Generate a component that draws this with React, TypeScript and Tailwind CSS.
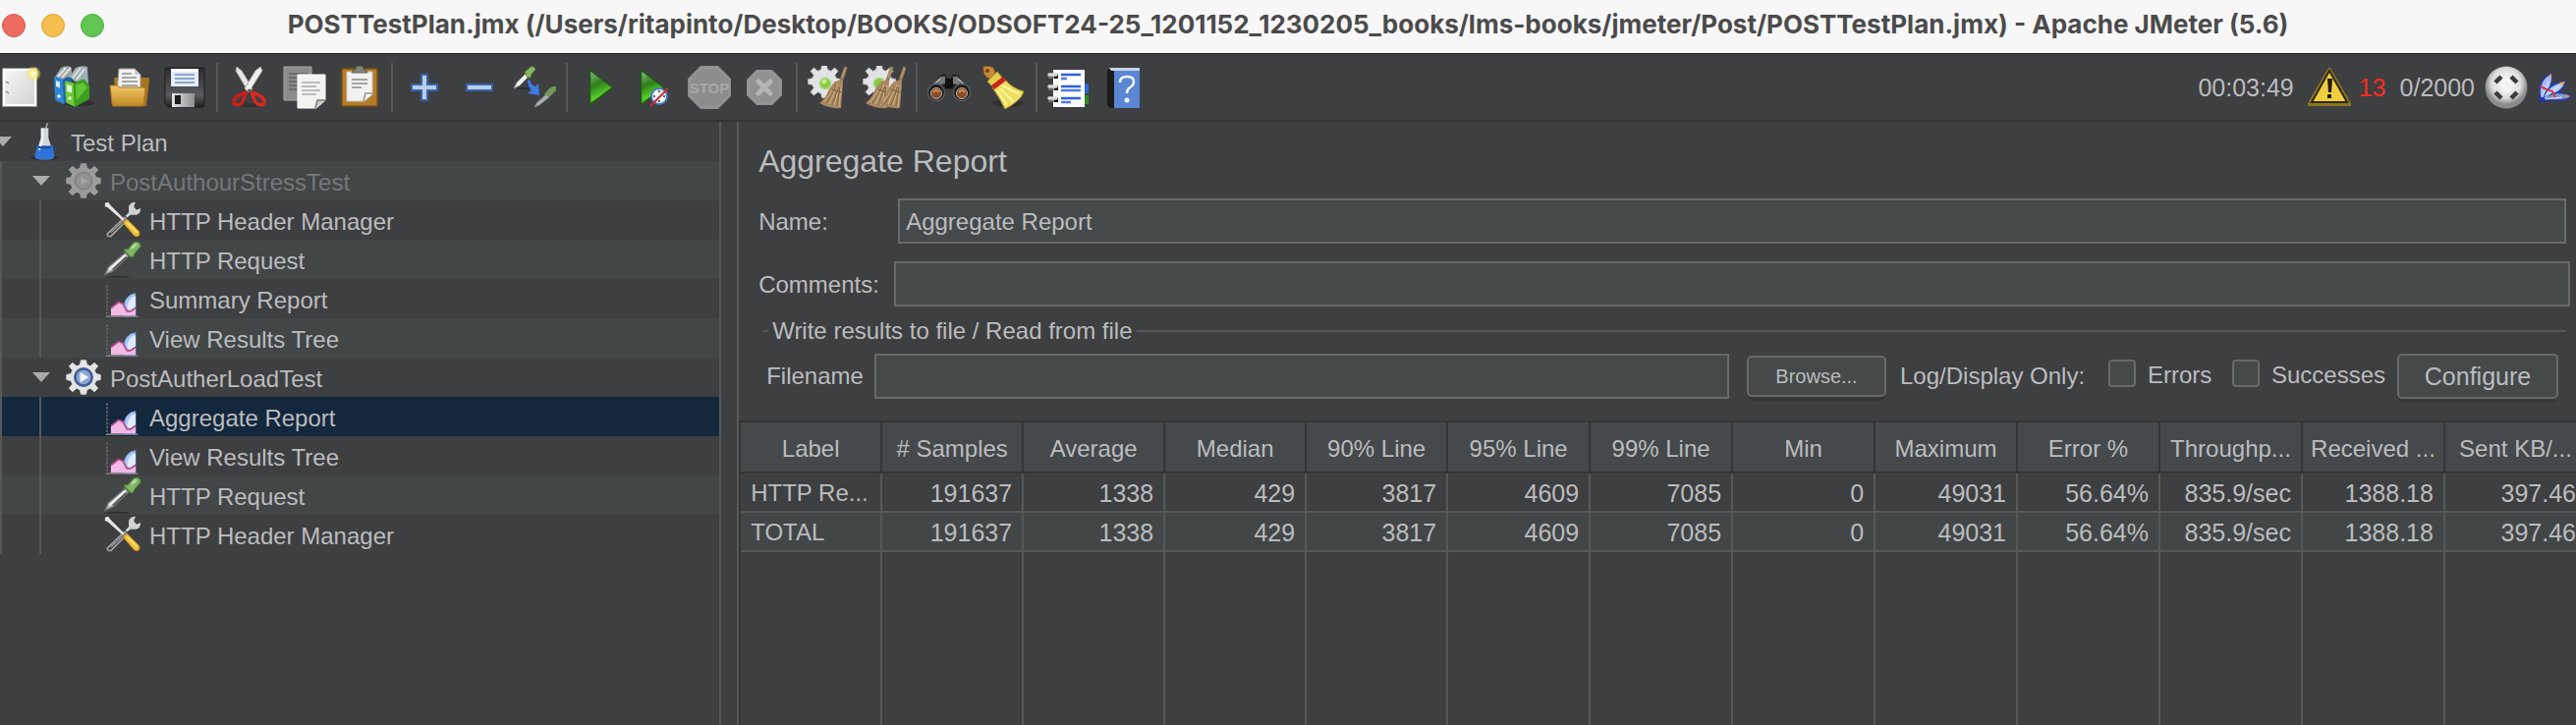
import type { ReactNode } from "react";

function Svg({ children, className = "size-11" }: { children: ReactNode; className?: string }) {
  return (
    <svg viewBox="0 0 44 44" className={`${className} block shrink-0`} fill="none" aria-hidden="true">
      {children}
    </svg>
  );
}

/* ---------- toolbar icons ---------- */

const NewIcon = () => (
  <Svg>
    <defs>
      <linearGradient id="paper" x1="0" y1="0" x2="1" y2="1">
        <stop offset="0" stopColor="#f6f6f6" />
        <stop offset="1" stopColor="#d4d4d4" />
      </linearGradient>
      <radialGradient id="glow">
        <stop offset="0" stopColor="#fffff0" />
        <stop offset="0.45" stopColor="#f6ef8e" />
        <stop offset="1" stopColor="#e6d94a" stopOpacity="0" />
      </radialGradient>
    </defs>
    <path d="M4.500 2.500h35v39h-35z" fill="#fff" stroke="#8f918c" />
    <path d="M7 5h30v34H7z" fill="url(#paper)" />
    <path d="M8 16l3 2M8 26l3 2" stroke="#888" strokeWidth="1.500" />
    <circle cx="36" cy="8" r="8" fill="url(#glow)" />
  </Svg>
);

const TemplatesIcon = () => (
  <Svg>
    <ellipse cx="26" cy="38" rx="16" ry="3" fill="#2e2f31" />
    <path d="M2 11l6-9q5-3 10-1l2 10-6 5z" fill="#9fa3a6" />
    <path d="M17 11l6-9q6-3 12-1l1 18-14-3z" fill="#9db0b6" />
    <path d="M5 11l8-9M9 12l9-10M20 12l8-10M24 14l8-11" stroke="#dfe2e3" strokeWidth="2" />
    <path d="M1 12q0-2 2-1l8 3v25l-7-3q-2-1-2-3z" fill="#2f86d2" />
    <path d="M10 14l5-3 4 2v22l-8 4z" fill="#1b5fa6" />
    <path d="M3 15l4 1.500v6L3 21z" fill="#d5e8f8" />
    <circle cx="6" cy="31" r="1.700" fill="#fff" />
    <path d="M12 17q0-2 2-1.500l7 2 1 24-7-3q-2-1-2-3z" fill="#6ccb36" />
    <path d="M21 18l8-4q2-1 4 1l4 5v12q0 2-2 3l-13 7z" fill="#3c9f1e" />
    <path d="M23 20l7-3 5 5-11 13z" fill="#62c436" />
    <path d="M14 19l5 1.500v7L14 26z" fill="#e4f7d6" />
    <circle cx="17" cy="33" r="1.800" fill="#fff" />
  </Svg>
);

const OpenIcon = () => (
  <Svg>
    <defs>
      <linearGradient id="folder" x1="0" y1="0" x2="0" y2="1">
        <stop offset="0" stopColor="#f1c869" />
        <stop offset="1" stopColor="#c08724" />
      </linearGradient>
    </defs>
    <path d="M6 12h34q2 0 2 2l-3 27H8z" fill="#a8741c" />
    <path d="M11 3h16l6 6v18H9z" fill="#f2f2f0" stroke="#9b9b98" />
    <path d="M27 3v6h6z" fill="#c8c8c4" />
    <path d="M14 8h10M14 12h15M14 16h16M14 20h16" stroke="#8f8f8c" strokeWidth="1.500" />
    <path d="M2 20h7l3 2h24q2 0 2 2l-2 17H6q-2 0-2-2z" fill="url(#folder)" stroke="#a5741f" />
  </Svg>
);

const SaveIcon = () => (
  <Svg>
    <defs>
      <linearGradient id="disk" x1="0" y1="0" x2="0" y2="1">
        <stop offset="0" stopColor="#2b2c30" />
        <stop offset="0.7" stopColor="#5a5b60" />
        <stop offset="1" stopColor="#1d1e20" />
      </linearGradient>
      <linearGradient id="shutter" x1="0" y1="0" x2="1" y2="0">
        <stop offset="0" stopColor="#e4e4e4" />
        <stop offset="1" stopColor="#8e8e8e" />
      </linearGradient>
    </defs>
    <path d="M4 2h36q2 0 2 2v36q0 2-2 2H5l-3-3V4q0-2 2-2z" fill="url(#disk)" stroke="#1d1e20" />
    <path d="M8 3h28v18H8z" fill="#e4ecf8" />
    <path d="M8 3h28v3H8z" fill="#fff" />
    <path d="M12 9h20M12 13h20M12 17h20" stroke="#8ea4cb" strokeWidth="1.800" />
    <path d="M9 28h23v14H9z" fill="url(#shutter)" />
    <path d="M12 30h6v9h-6z" fill="#1b1b1c" />
  </Svg>
);

const CutIcon = () => (
  <Svg>
    <ellipse cx="24" cy="40" rx="14" ry="2" fill="#303133" />
    <path d="M9 1l5 4 11 18-4 4L8 5z" fill="#e6e6e4" stroke="#a5a5a2" />
    <path d="M33 1l-5 4-11 18 4 4L35 5z" fill="#f0f0ee" stroke="#a5a5a2" />
    <path d="M19 26c-2 3-2 8-5 12-3 3-8 2-8-1 0-6 7-8 12-10z" stroke="#c7201c" strokeWidth="3.500" />
    <path d="M24 26c1 3 2 8 5 12 3 3 8 2 8-1 0-6-7-8-12-10z" stroke="#d62823" strokeWidth="3.500" />
    <circle cx="21.500" cy="25" r="1.500" fill="#555" />
  </Svg>
);

const CopyIcon = () => (
  <Svg>
    <path d="M1 1h28v34H1z" fill="#8b8d8c" stroke="#a6a8a6" />
    <path d="M6 8h19M6 12h19M6 16h12M6 20h12M6 24h12" stroke="#6b6d6c" strokeWidth="1.800" />
    <path d="M15 9h28v26l-9 8H15z" fill="#f3f3f1" stroke="#fff" />
    <path d="M43 35h-8l-2 8" fill="#c9cbc7" stroke="#777b76" strokeWidth="1.500" />
    <path d="M19 17h19M19 21h15M19 25h19M19 29h15" stroke="#bcbebb" strokeWidth="1.800" />
  </Svg>
);

const PasteIcon = () => (
  <Svg>
    <path d="M5 3h34q1 0 1 1v36q0 1-1 1H5q-1 0-1-1V4q0-1 1-1z" fill="#b37d2a" stroke="#7e5412" strokeWidth="1.500" />
    <path d="M9 6h26v23l-8 7H9z" fill="#f1f1ef" stroke="#c9c9c4" />
    <path d="M35 28h-7l-2 8" fill="#fff" stroke="#8f918c" strokeWidth="1.500" />
    <path d="M14 7q0-3 4-3 0-4 4-4t4 4q4 0 4 3z" fill="#85877f" stroke="#5f615a" />
    <path d="M14 14h16M14 18h16M14 22h10" stroke="#a4a6a3" strokeWidth="1.800" />
  </Svg>
);

const PlusIcon = () => (
  <Svg>
    <path d="M19 9h6v10h10v6H25v10h-6V25H9v-6h10z" fill="#b9cdea" stroke="#3963ab" strokeWidth="2" />
  </Svg>
);

const MinusIcon = () => (
  <Svg>
    <path d="M9 19h26v6H9z" fill="#b9cdea" stroke="#3963ab" strokeWidth="2" />
  </Svg>
);

const ToggleIcon = () => (
  <Svg>
    <path d="M5 23h14" stroke="#2f3032" strokeWidth="2" />
    <path d="M1 23l3-6L14 7l3 3L7 20z" fill="#f0f0ef" stroke="#909290" />
    <path d="M12 6l3-2 3-3q4-1 5 3l-4 4-1 4-3 0z" fill="#86b562" stroke="#55813a" />
    <path d="M15 15l2-1q2 6 6 7l3-3 1 12-12-2 4-3q-4-4-4-10z" fill="#3d78e4" />
    <g opacity="0.750">
      <path d="M22 42l2-4 10-9 3 3-10 8z" fill="#d3d4d4" stroke="#8d8f8e" />
      <path d="M32 29l5-6q4-3 7-2 1 3-1 5l-6 6z" fill="#86b562" />
    </g>
  </Svg>
);

const PlayShape = () => (
  <>
    <defs>
      <linearGradient id="play" x1="0" y1="0" x2="0.300" y2="1">
        <stop offset="0" stopColor="#8fc48a" />
        <stop offset="0.45" stopColor="#2f7d1b" />
        <stop offset="0.8" stopColor="#57cf2c" />
        <stop offset="1" stopColor="#2c8a18" />
      </linearGradient>
    </defs>
    <path d="M12.500 4.500L35.500 22 12.500 39.500z" fill="url(#play)" stroke="#1d5a12" strokeWidth="1.500" />
  </>
);

const StartIcon = () => (
  <Svg>
    <PlayShape />
  </Svg>
);

const StartNoPausesIcon = () => (
  <Svg>
    <g transform="translate(-4 0)">
      <PlayShape />
    </g>
    <circle cx="27" cy="31" r="8" fill="#f2f4f8" stroke="#4678b8" strokeWidth="2" />
    <path d="M27 25v2M27 35v2M21 31h2M31 31h2" stroke="#333" strokeWidth="1.500" />
    <path d="M18 41L36 23" stroke="#cf2a2a" strokeWidth="2" />
  </Svg>
);

const StopIcon = () => (
  <Svg>
    <path d="M13 0h18l13 13v18L31 44H13L0 31V13z" fill="#8d8d8d" />
    <path d="M14 2h16l12 12v16L30 42H14L2 30V14z" stroke="#9b9b9b" />
    <text x="22" y="28" textAnchor="middle" fontSize="15" fontWeight="700" fontFamily="'Liberation Sans',sans-serif" fill="#a8a8a8">
      STOP
    </text>
  </Svg>
);

const ShutdownIcon = () => (
  <Svg>
    <path d="M14 4h16l10 10v16L30 40H14L4 30V14z" fill="#919191" />
    <path d="M15 6h14l9 9v14l-9 9H15l-9-9V15z" stroke="#9d9d9d" />
    <path d="M16 16l12 12M28 16L16 28" stroke="#b5b5b5" strokeWidth="5" strokeLinecap="round" />
  </Svg>
);

const GEAR =
  "M19 2h6l1 5 4 2 5-4 4 4-4 5 2 4 5 1v6l-5 1-2 4 4 5-4 4-5-4-4 2-1 5h-6l-1-5-4-2-5 4-4-4 4-5-2-4-5-1v-6l5-1 2-4-4-5 4-4 5 4 4-2z";

const Bristle = ({ x }: { x: number }) => (
  <g transform={`translate(${x} 0)`}>
    <path d="M34 16L39 1" stroke="#93795a" strokeWidth="3.500" />
    <path d="M35 12L38.500 3" stroke="#b89c74" strokeWidth="1.500" />
    <path d="M28 16l7-2 1 3-2 26q-12 1-22-5 4-3 7-8 3-8 9-14z" fill="#a88760" />
    <path d="M17 37l11-15M22 39l9-20M27 40l6-20M32 42l2-22" stroke="#cdae80" strokeWidth="1.200" />
    <path d="M19 38l10-17M25 40l7-19M30 41l3-20" stroke="#80653f" />
    <path d="M25 24l9 3" stroke="#8a6c48" strokeWidth="1.500" />
  </g>
);

const ClearIcon = () => (
  <Svg>
    <g transform="translate(-1 -2) scale(0.820)">
      <path d={GEAR} fill="#e2e3e4" stroke="#c4c5c6" />
    </g>
    <circle cx="18" cy="18" r="5.500" fill="#86cc3c" stroke="#a8d488" strokeWidth="1.500" />
    <circle cx="17" cy="16" r="2.500" fill="#c3ee8e" />
    <Bristle x={0} />
  </Svg>
);

const ClearAllIcon = () => (
  <Svg>
    <g transform="translate(-1 -2) scale(0.820)">
      <path d={GEAR} fill="#e2e3e4" stroke="#c4c5c6" />
    </g>
    <circle cx="17" cy="18" r="5.500" fill="#86cc3c" stroke="#a8d488" strokeWidth="1.500" />
    <Bristle x={-9} />
    <Bristle x={4} />
  </Svg>
);

const SearchIcon = () => (
  <Svg>
    <path d="M12 10l6-2 4 6 4-6 6 2 9 14H3z" fill="#26272a" />
    <path d="M18 13h8v10h-8z" fill="#111" />
    <path d="M13 11l5 0 0 7-8 2zM31 11l-5 0 0 7 8 2z" fill="#77797c" />
    <path d="M6 20l7-7M38 20l-7-7" stroke="#a4a6a8" strokeWidth="2" />
    <circle cx="9" cy="27" r="8.500" fill="#1a1a1b" stroke="#57595b" strokeWidth="1.500" />
    <circle cx="35" cy="27" r="8.500" fill="#1a1a1b" stroke="#57595b" strokeWidth="1.500" />
    <circle cx="9" cy="28" r="5.500" fill="#8a4c25" stroke="#b8b3ad" />
    <circle cx="35" cy="28" r="5.500" fill="#8a4c25" stroke="#b8b3ad" />
    <path d="M6 27q3-4 6 0M32 27q3-4 6 0" stroke="#d48a4f" strokeWidth="2" />
  </Svg>
);

const ResetSearchIcon = () => (
  <Svg>
    <ellipse cx="26" cy="38" rx="16" ry="4" fill="#303133" />
    <path d="M1 1q5-2 10 1 2 3 2 7l5 4-7 6-4-6Q0 10 1 1z" fill="#c8893c" stroke="#8f5c1f" />
    <circle cx="5" cy="5" r="2" fill="#6d4312" />
    <path d="M5 16l10-10 5 6-10 9z" fill="#e3d04a" stroke="#a5922a" />
    <path d="M22 13q8 10 20 13-2 9-19 18Q17 32 10 22z" fill="#ecdf5d" stroke="#a5922a" />
    <path d="M20 20l18 9M18 23l14 14M15 25l10 15" stroke="#fbf5a4" strokeWidth="2" />
    <path d="M9 20l12-9 3 4-12 9z" fill="#c9231d" />
  </Svg>
);

const LogIcon = () => (
  <Svg>
    <path d="M36 18h6v10h-6z" fill="#2c66d8" />
    <path d="M36 30h6v9h-6z" fill="#2f8a1d" />
    <path d="M6 4h32v38H6z" fill="#fdfdfd" />
    <path d="M14 9h20M14 21h20M14 33h20" stroke="#2f62d6" strokeWidth="2.500" />
    <path d="M14 13h6M14 25h20M14 37h10" stroke="#4e7de4" strokeWidth="2.500" />
    <path d="M7 8h4v5H7zM7 20h4v5H7zM7 32h4v5H7z" fill="#111" />
    <path d="M2 9h7M2 21h7M2 33h7" stroke="#d9d9d9" strokeWidth="3.500" strokeLinecap="round" />
    <path d="M1 12h6M1 24h6M1 36h6" stroke="#7c7c7c" strokeWidth="1.500" />
  </Svg>
);

const HelpIcon = () => (
  <Svg>
    <path d="M5 5l3-3h30v41H8l-3-3z" fill="#1b1b1c" />
    <path d="M12 4h26v39H12z" fill="#5a86d3" />
    <path d="M7 2h31v3H9z" fill="#c9d3e3" />
    <path d="M18 17q0-6 7-6t7 5q0 4-4 6-3 2-3 6" stroke="#f2f5fb" strokeWidth="2.500" />
    <circle cx="25" cy="35" r="2.500" fill="#f2f5fb" />
  </Svg>
);

/* ---------- status icons ---------- */

const WarningIcon = () => (
  <Svg>
    <path d="M0 38L21 2h2l21 36v3H0z" fill="#8a7620" />
    <path d="M22 5l18 32H4z" fill="#efcf3f" stroke="#2d270d" strokeWidth="2" />
    <path d="M20 13h5l-1 14h-3zM20 29h4v4h-4z" fill="#201b08" />
  </Svg>
);

const RemoteIcon = () => (
  <Svg>
    <defs>
      <radialGradient id="ball" cx="0.500" cy="0.400">
        <stop offset="0" stopColor="#fff" />
        <stop offset="0.7" stopColor="#dcdcdc" />
        <stop offset="1" stopColor="#8b8b8b" />
      </radialGradient>
    </defs>
    <circle cx="22" cy="22" r="21.500" fill="url(#ball)" />
    <path d="M11 17l6-6M27 11l6 6M11 27l6 6M27 33l6-6" stroke="#3a3b3c" strokeWidth="4.500" />
    <circle cx="22" cy="22" r="6" fill="#f3f3f3" />
  </Svg>
);

const FeatherIcon = () => (
  <svg viewBox="0 0 36 32" className="block h-8 w-9 shrink-0" fill="none" aria-hidden="true">
    <path d="M3 27C0 16 5 5 14 2q3 8-7 25z" fill="#a9bdee" stroke="#2340b8" strokeWidth="1.500" />
    <path d="M5 27Q11 12 28 10q-1 10-21 17z" fill="#b9caf2" stroke="#2340b8" strokeWidth="1.500" />
    <path d="M6 27q14-10 28-2-6 6-27 3z" fill="#8397c9" stroke="#2340b8" strokeWidth="1.500" />
    <path d="M4 28l7-18M6 28L22 14M7 28l18-2" stroke="#e9effc" />
    <path d="M3 15l6 3 6 2 3 6" stroke="#d23a4d" strokeWidth="2" />
    <path d="M11 4l3-2v5zM22 11l6-1-3 4zM28 23l5 2-4 1z" fill="#f0a13a" />
    <path d="M1 25l6 2 2 4-7-1z" fill="#1b36b4" />
  </svg>
);

/* ---------- tree icons ---------- */

const TREE_ICON = "size-[38px]";

const FlaskIcon = () => (
  <Svg className={TREE_ICON}>
    <ellipse cx="22" cy="41" rx="16" ry="3" fill="#2b2c2e" />
    <path d="M24 6l2-6" stroke="#9b9d9f" strokeWidth="2" />
    <path d="M18 6h9v12l6 19q1 6-5 6H17q-6 0-5-6l6-19z" fill="#d3d6da" />
    <path d="M14 27h18l2 11q0 5-5 5H16q-6 0-5-5z" fill="#2f72da" />
    <path d="M20 7v14l-4 11" stroke="#f4f5f6" strokeWidth="2.500" />
    <path d="M15 29h15" stroke="#1b4da3" strokeWidth="2.500" />
  </Svg>
);

const GearDisabledIcon = () => (
  <Svg className={TREE_ICON}>
    <path d={GEAR} fill="#9c9c9c" stroke="#9c9c9c" />
    <circle cx="22" cy="22" r="10" fill="#929292" stroke="#858585" strokeWidth="2.500" />
    <path d="M19 17l8 5-8 5z" fill="#a4a4a4" />
  </Svg>
);

const GearIcon = () => (
  <Svg className={TREE_ICON}>
    <path d={GEAR} fill="#e4e4e4" stroke="#d4d4d4" />
    <circle cx="22" cy="22" r="10" fill="#8ea6cf" stroke="#3f5c98" strokeWidth="3" />
    <path d="M18 16l10 6-10 6z" fill="#f2f4f8" />
  </Svg>
);

const ToolsIcon = () => (
  <Svg className={TREE_ICON}>
    <path d="M4 38L24 19l3 3L8 41q-5 1-4-3z" fill="#3a3b3c" stroke="#a4a6a6" strokeWidth="1.800" />
    <path d="M8 37L24 22" stroke="#a4a6a6" strokeWidth="1.200" />
    <path d="M25 17l4-4V6q2-5 8-5l-2 5 3 4 5-2q0 7-6 8l-6 0-4 3z" fill="#d0d2d4" />
    <path d="M1 2l4-1 2 3 17 17-2 2L4 7 1 6z" fill="#e4e6e8" />
    <path d="M24 22l4 0 13 13q2 4-1 6-3 1-5-1L23 26z" fill="#efc033" stroke="#b8851a" />
    <path d="M27 25l12 12" stroke="#ffe07c" strokeWidth="2" />
  </Svg>
);

const DropperIcon = () => (
  <Svg className={TREE_ICON}>
    <ellipse cx="16" cy="43" rx="14" ry="1.500" fill="#2f3133" />
    <path d="M1 40l4-9 20-17 4 4L10 36z" fill="#b9bbbb" stroke="#6f7170" strokeWidth="1.500" />
    <path d="M6 34L25 17" stroke="#f0f0f0" strokeWidth="2.500" />
    <path d="M10 34L26 19" stroke="#4b4d4d" strokeWidth="1.500" />
    <path d="M24 10l4 0 7-8q8-2 8 5l-7 8-2 4-3 0-7-7z" fill="#7fb765" stroke="#4b7d38" strokeWidth="1.200" />
    <path d="M32 9l6-5" stroke="#b4d99c" strokeWidth="3" />
  </Svg>
);

const ChartIcon = () => (
  <Svg className={TREE_ICON}>
    <path d="M3.500 6v37" stroke="#626466" strokeWidth="2" strokeDasharray="3 1.500" />
    <path d="M2 43h38" stroke="#77797b" strokeWidth="2" />
    <path d="M23 36q0-11 5-16 4-4 9-4v26H23z" fill="#a9c6f5" stroke="#6f93d6" />
    <path d="M27 33q1-10 8-14l2 0v12l-6 6z" fill="#dfeaff" />
    <path d="M8 42V33l9-7 5 2 5 9h4l6-4v9z" fill="#f0b9e6" />
    <path d="M8 33l9-7 5 2 5 9h4l6-4" stroke="#b04a86" strokeWidth="2" />
  </Svg>
);

/* ---------- data ---------- */

type Tool = { label: string; icon: () => ReactNode };

const TOOL_GROUPS: Tool[][] = [
  [
    { label: "New", icon: NewIcon },
    { label: "Templates", icon: TemplatesIcon },
    { label: "Open", icon: OpenIcon },
    { label: "Save", icon: SaveIcon },
  ],
  [
    { label: "Cut", icon: CutIcon },
    { label: "Copy", icon: CopyIcon },
    { label: "Paste", icon: PasteIcon },
  ],
  [
    { label: "Expand All", icon: PlusIcon },
    { label: "Collapse All", icon: MinusIcon },
    { label: "Toggle", icon: ToggleIcon },
  ],
  [
    { label: "Start", icon: StartIcon },
    { label: "Start no pauses", icon: StartNoPausesIcon },
    { label: "Stop", icon: StopIcon },
    { label: "Shutdown", icon: ShutdownIcon },
  ],
  [
    { label: "Clear", icon: ClearIcon },
    { label: "Clear All", icon: ClearAllIcon },
  ],
  [
    { label: "Search", icon: SearchIcon },
    { label: "Reset Search", icon: ResetSearchIcon },
  ],
  [
    { label: "Function Helper", icon: LogIcon },
    { label: "Help", icon: HelpIcon },
  ],
];

type Node = { label: string; icon: () => ReactNode; depth: 0 | 1 | 2; disabled?: boolean; selected?: boolean };

const NODES: Node[] = [
  { label: "Test Plan", icon: FlaskIcon, depth: 0 },
  { label: "PostAuthourStressTest", icon: GearDisabledIcon, depth: 1, disabled: true },
  { label: "HTTP Header Manager", icon: ToolsIcon, depth: 2 },
  { label: "HTTP Request", icon: DropperIcon, depth: 2 },
  { label: "Summary Report", icon: ChartIcon, depth: 2 },
  { label: "View Results Tree", icon: ChartIcon, depth: 2 },
  { label: "PostAutherLoadTest", icon: GearIcon, depth: 1 },
  { label: "Aggregate Report", icon: ChartIcon, depth: 2, selected: true },
  { label: "View Results Tree", icon: ChartIcon, depth: 2 },
  { label: "HTTP Request", icon: DropperIcon, depth: 2 },
  { label: "HTTP Header Manager", icon: ToolsIcon, depth: 2 },
];

const COLUMNS = [
  "Label",
  "# Samples",
  "Average",
  "Median",
  "90% Line",
  "95% Line",
  "99% Line",
  "Min",
  "Maximum",
  "Error %",
  "Throughp...",
  "Received ...",
  "Sent KB/...",
];

const VALUES = ["191637", "1338", "429", "3817", "4609", "7085", "0", "49031", "56.64%", "835.9/sec", "1388.18", "397.46"];

const ROWS = [
  ["HTTP Re...", ...VALUES],
  ["TOTAL", ...VALUES],
];

/* ---------- parts ---------- */

function TitleBar() {
  return (
    <header className="relative flex h-[55px] shrink-0 items-center justify-center border-b border-[#1b1c1e] bg-[#f7f7f7] pb-1">
      <div className="absolute top-3.5 left-0.5 flex gap-4">
        <button aria-label="Close" className="size-6 rounded-full border border-[#d6584c] bg-[#ed6b5f]" />
        <button aria-label="Minimize" className="size-6 rounded-full border border-[#d9a23c] bg-[#f5bf4f]" />
        <button aria-label="Zoom" className="size-6 rounded-full border border-[#50a93f] bg-[#62c655]" />
      </div>
      <h1 className="truncate font-['Inter',sans-serif] text-[26px] leading-8 font-bold text-[#4b4b4b]">
        POSTTestPlan.jmx (/Users/ritapinto/Desktop/BOOKS/ODSOFT24-25_1201152_1230205_books/lms-books/jmeter/Post/POSTTestPlan.jmx) - Apache JMeter (5.6)
      </h1>
    </header>
  );
}

function Toolbar() {
  return (
    <div className="flex h-[69px] shrink-0 items-center justify-between overflow-hidden border-b-2 border-[#343537]">
      <div className="-ml-2 flex items-center">
        {TOOL_GROUPS.map((group, i) => (
          <div key={i} className="flex items-center">
            {i > 0 && <div className="mx-1 h-[50px] w-0.5 bg-[#555759]" />}
            {group.map(({ label, icon: Icon }) => (
              <button key={label} aria-label={label} title={label} className="flex h-11 w-14 items-center justify-center">
                <Icon />
              </button>
            ))}
          </div>
        ))}
      </div>
      <div className="flex items-center pr-[3px] text-[25px]">
        <span>00:03:49</span>
        <button aria-label="Log errors" className="ml-3.5">
          <WarningIcon />
        </button>
        <span className="ml-2 text-[#f72c22]">13</span>
        <span className="ml-3.5">0/2000</span>
        <span className="ml-2.5">
          <RemoteIcon />
        </span>
        <span className="ml-2.5">
          <FeatherIcon />
        </span>
      </div>
    </div>
  );
}

const INDENT = ["-ml-2", "ml-[31px]", "ml-[73px]"];

function TreeRow({ node, index }: { node: Node; index: number }) {
  const Icon = node.icon;
  const bg = node.selected ? "bg-[#13283d]" : index % 2 ? "bg-[#424647]" : "";
  return (
    <li
      role="treeitem"
      aria-selected={!!node.selected}
      className={`flex h-10 items-center overflow-hidden ${node.depth > 0 ? "border-l-2 border-[#555759]" : "pl-0.5"} ${bg}`}
    >
      {node.depth === 2 && <span className="ml-[38px] h-full w-0.5 shrink-0 bg-[#555759]" />}
      {node.depth < 2 ? (
        <svg viewBox="0 0 18 10" className={`h-2.5 w-[18px] shrink-0 ${INDENT[node.depth]}`} aria-hidden="true">
          <path d="M0 0h18L9 10z" fill="#a9abad" />
        </svg>
      ) : null}
      <span className={node.depth === 2 ? "ml-16" : node.depth === 1 ? "ml-[15px]" : "ml-3.5"}>
        <Icon />
      </span>
      <span className={`ml-2 pt-1 whitespace-nowrap ${node.disabled ? "text-[#757779]" : ""}`}>
        {node.label}
      </span>
    </li>
  );
}

const FIELD = "h-[46px] min-w-0 flex-1 border-2 border-[#68696b] bg-[#45494a] px-1.5 pt-0.5 outline-none";
const BUTTON = "rounded-[5px] border-2 border-[#68696b] bg-[#45494a] shadow-[0_4px_0_#37383a]";
const CHECKBOX = "size-7 shrink-0 appearance-none rounded-[4px] border-2 border-[#68696b] bg-[#45494a]";

function ReportForm() {
  return (
    <form className="shrink-0 pt-5 pb-[22px]" onSubmit={(e) => e.preventDefault()}>
      <h2 className="mb-[18px] pl-5 text-[32px] leading-10">Aggregate Report</h2>
      <div className="mb-[18px] flex items-center pr-2.5 pl-5">
        <label htmlFor="name" className="w-[142px] pt-0.5">
          Name:
        </label>
        <input id="name" defaultValue="Aggregate Report" className={FIELD} />
      </div>
      <div className="flex items-center pr-1.5 pl-5">
        <label htmlFor="comments" className="w-[138px] pt-0.5">
          Comments:
        </label>
        <input id="comments" className={FIELD} />
      </div>
      <fieldset className="mt-2.5 mr-2.5 ml-6 border-t-2 border-[#555759] pl-1.5">
        <legend className="px-1 leading-[30px]">Write results to file / Read from file</legend>
        <div className="-ml-1.5 flex items-center pt-2 pr-2 pl-1">
          <label htmlFor="filename" className="w-[110px]">
            Filename
          </label>
          <input id="filename" className={FIELD} />
          <button className={`ml-[18px] h-[42px] w-[142px] text-[20px] ${BUTTON}`}>Browse...</button>
          <span className="ml-3.5 w-[212px] whitespace-nowrap">Log/Display Only:</span>
          <input id="errors" type="checkbox" className={`-mt-1.5 ${CHECKBOX}`} />
          <label htmlFor="errors" className="-mt-0.5 w-[98px] pl-3">
            Errors
          </label>
          <input id="successes" type="checkbox" className={`-mt-1.5 ${CHECKBOX}`} />
          <label htmlFor="successes" className="-mt-0.5 w-[140px] pl-3">
            Successes
          </label>
          <button className={`h-[46px] w-[164px] text-[25px] ${BUTTON}`}>Configure</button>
        </div>
      </fieldset>
    </form>
  );
}

function ReportTable() {
  return (
    <div className="min-h-0 flex-1 overflow-hidden border-t-2 border-l-2 border-[#343537]">
      <table className="h-full w-[calc(100%+12px)] table-fixed border-separate border-spacing-0">
        <colgroup>
          {COLUMNS.map((c, i) => (
            <col key={c} className={i < 5 ? "w-36" : ""} />
          ))}
        </colgroup>
        <thead>
          <tr>
            {COLUMNS.map((c) => (
              <th key={c} className="h-[52px] border-r-2 border-b-2 border-[#343537] bg-[#45494b] px-1 pt-1 font-normal whitespace-nowrap">
                {c}
              </th>
            ))}
          </tr>
        </thead>
        <tbody>
          {ROWS.map((row, r) => (
            <tr key={row[0]} className={r % 2 ? "bg-[#424647]" : ""}>
              {row.map((v, i) => (
                <td
                  key={i}
                  className={`h-10 border-r-2 border-b-2 border-[#555759] px-2.5 pt-0.5 whitespace-nowrap ${i === 0 ? "text-left" : "text-right text-[25px]"}`}
                >
                  {v}
                </td>
              ))}
            </tr>
          ))}
          <tr className="h-full" aria-hidden="true">
            {COLUMNS.map((c) => (
              <td key={c} className="border-r-2 border-[#555759]" />
            ))}
          </tr>
        </tbody>
      </table>
    </div>
  );
}

export default function App() {
  return (
    <div className="flex h-screen flex-col overflow-hidden bg-[#3e3f41] font-['Liberation_Sans',Arial,sans-serif] text-[24px] leading-8 text-[#bbbcbd]">
      <TitleBar />
      <Toolbar />
      <main className="flex min-h-0 flex-1">
        <ul role="tree" className="w-[28%] shrink-0 border-r-2 border-[#555759]">
          {NODES.map((n, i) => (
            <TreeRow key={i} node={n} index={i} />
          ))}
        </ul>
        <section className="ml-4 flex min-w-0 flex-1 flex-col border-l-2 border-[#555759]">
          <ReportForm />
          <ReportTable />
        </section>
      </main>
    </div>
  );
}
